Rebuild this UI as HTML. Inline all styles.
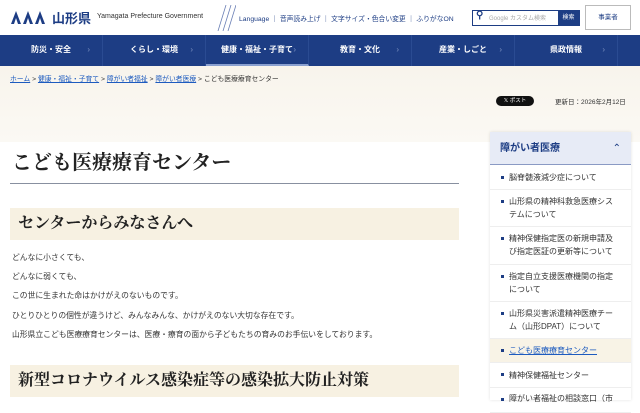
<!DOCTYPE html>
<html><head><meta charset="utf-8"><style>
*{margin:0;padding:0;box-sizing:border-box}
body{width:640px;height:400px;overflow:hidden;background:#fff;font-family:"Liberation Sans","Noto Sans CJK JP",sans-serif;color:#222;position:relative}
.a{position:absolute;white-space:nowrap}
.serif{font-family:"Liberation Serif","Noto Serif CJK JP",serif}
.nav{position:absolute;top:35px;left:0;width:640px;height:31px;background:#1d3d84}
.nav div{position:absolute;top:0;height:31px;line-height:30px;color:#fff;font-size:8px;font-weight:bold;width:103px;text-align:center;border-right:1px solid #2a4b92}
.nav div span{position:absolute;right:12px;color:#7b90c0;font-weight:normal}
.bg{position:absolute;top:66px;left:0;width:640px;height:76px;background:linear-gradient(#f8f4ec,#fbf9f4)}
.p{font-size:7.8px;color:#333}
.h2{position:absolute;left:10px;width:449px;height:32px;background:#f7f1e2;font-size:16px;font-weight:bold;padding-left:8px;line-height:32px}
.side{position:absolute;left:490px;top:132px;width:141px;height:268px;background:#fff;box-shadow:0 0 3px rgba(0,0,0,.12)}
.side .hd{height:33px;background:#e7ebf6;border-bottom:1px solid #8a9ac4;font-size:10px;font-weight:bold;color:#1d3d84;line-height:33px;padding-left:10px}
.li{position:absolute;left:0;width:141px;font-size:8px;color:#333;padding:0 16px 0 19px;line-height:13px;border-bottom:1px solid #eee;white-space:normal}
.li:before{content:"";position:absolute;left:11px;top:10px;width:2.5px;height:2.5px;background:#1d3d84}
</style></head><body>
<svg class="a" style="left:11px;top:11px" width="36" height="13" viewBox="0 0 36 13"><path d="M0 13L5 0L10 13H7L5 7L3 13ZM12 13L17 0L22 13H19L17 7L15 13ZM24 13L29 0L34 13H31L29 7L27 13Z" fill="#1d3d84"/></svg>
<div class="a" style="left:52px;top:8px;font-size:13px;font-weight:bold;color:#1d3d84">山形県</div>
<div class="a" style="left:97px;top:13px;font-size:7px;color:#333">Yamagata Prefecture Government</div>
<svg class="a" style="left:216px;top:5px" width="20" height="26"><path d="M2 26L10 0M7 26L15 0M12 26L20 0" stroke="#6a7fb5" stroke-width=".8"/></svg>
<div class="a" style="left:239px;top:13px;font-size:6.8px;color:#1d3d84">Language ｜ 音声読み上げ ｜ 文字サイズ・色合い変更 ｜ ふりがなON</div>
<div class="a" style="left:472px;top:10px;width:108px;height:16px;border:1px solid #1d3d84"></div>
<div class="a" style="left:476px;top:10px;font-size:10px;color:#1d3d84;font-weight:bold">&#9906;</div>
<div class="a" style="left:489px;top:13px;font-size:6px;color:#aaa">Google カスタム検索</div>
<div class="a" style="left:558px;top:11px;width:21px;height:14px;background:#1d3d84;color:#fff;font-size:6px;text-align:center;line-height:14px">検索</div>
<div class="a" style="left:585px;top:5px;width:46px;height:25px;border:1px solid #bbb;font-size:6.5px;text-align:center;line-height:23px;color:#1d3d84">事業者</div>
<div class="nav">
<div style="left:0">防災・安全<span>›</span></div>
<div style="left:103px">くらし・環境<span>›</span></div>
<div style="left:206px;border-bottom:2px solid #8aa0d0">健康・福祉・子育て<span>›</span></div>
<div style="left:309px">教育・文化<span>›</span></div>
<div style="left:412px">産業・しごと<span>›</span></div>
<div style="left:515px">県政情報<span>›</span></div>
</div>
<div class="bg"></div>
<div class="a" style="left:10px;top:73px;font-size:6.8px;color:#333"><span style="color:#1d5bbf;text-decoration:underline">ホーム</span> &gt; <span style="color:#1d5bbf;text-decoration:underline">健康・福祉・子育て</span> &gt; <span style="color:#1d5bbf;text-decoration:underline">障がい者福祉</span> &gt; <span style="color:#1d5bbf;text-decoration:underline">障がい者医療</span> &gt; こども医療療育センター</div>
<div class="a" style="left:496px;top:96px;width:38px;height:10px;background:#111;border-radius:5px;color:#fff;font-size:5.5px;text-align:center;line-height:10px">𝕏 ポスト</div>
<div class="a" style="left:555px;top:96px;font-size:6.5px;color:#333">更新日：2026年2月12日</div>
<div class="a" style="left:0;top:142px;width:480px;height:258px;background:#fff"></div>
<div class="a serif" style="left:12px;top:146px;font-size:20px;font-weight:bold">こども医療療育センター</div>
<div class="a" style="left:10px;top:183px;width:449px;height:1px;background:#8890a0"></div>
<div class="h2 serif" style="top:208px">センターからみなさんへ</div>
<div class="a p" style="left:12px;top:252px">どんなに小さくても、</div>
<div class="a p" style="left:12px;top:271px">どんなに弱くても、</div>
<div class="a p" style="left:12px;top:290px">この世に生まれた命はかけがえのないものです。</div>
<div class="a p" style="left:12px;top:310px">ひとりひとりの個性が違うけど、みんなみんな、かけがえのない大切な存在です。</div>
<div class="a p" style="left:12px;top:329px">山形県立こども医療療育センターは、医療・療育の面から子どもたちの育みのお手伝いをしております。</div>
<div class="h2 serif" style="top:365px">新型コロナウイルス感染症等の感染拡大防止対策</div>
<div class="side">
<div class="hd">障がい者医療<span style="position:absolute;right:10px;color:#1d3d84;font-weight:normal">⌃</span></div>
<div class="li" style="top:34px;height:24px;padding-top:5px">脳脊髄液減少症について</div>
<div class="li" style="top:58px;height:37px;padding-top:5px">山形県の精神科救急医療システムについて</div>
<div class="li" style="top:95px;height:38px;padding-top:5px">精神保健指定医の新規申請及び指定医証の更新等について</div>
<div class="li" style="top:133px;height:37px;padding-top:5px">指定自立支援医療機関の指定について</div>
<div class="li" style="top:170px;height:37px;padding-top:5px">山形県災害派遣精神医療チーム（山形DPAT）について</div>
<div class="li" style="top:207px;height:24px;padding-top:5px;background:#f8f3e6;color:#1d5bbf;text-decoration:underline">こども医療療育センター</div>
<div class="li" style="top:231px;height:25px;padding-top:6px">精神保健福祉センター</div>
<div class="li" style="top:256px;height:25px;padding-top:4px">障がい者福祉の相談窓口（市</div>
</div>
</body></html>
